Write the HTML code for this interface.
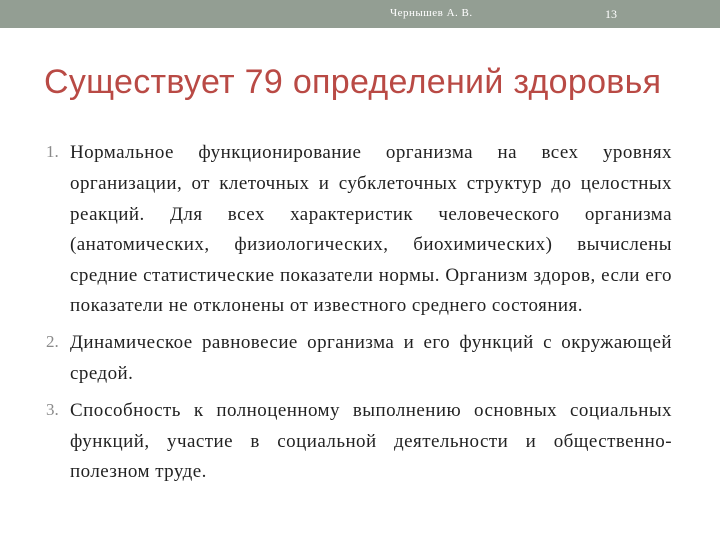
<!DOCTYPE html>
<html><head><meta charset="utf-8"><style>
body{margin:0;width:720px;height:540px;background:#fff;position:relative;overflow:hidden;font-family:"Liberation Serif",serif;}
.bar{position:absolute;left:0;top:0;width:720px;height:28px;background:#939e93;}
.hd{position:absolute;top:7px;color:#fff;font-family:"Liberation Serif",serif;font-size:11px;}
.t{position:absolute;left:44px;top:63px;font-family:"Liberation Sans",sans-serif;font-size:34px;color:#b94a45;white-space:nowrap;letter-spacing:0.3px;}
.l{position:absolute;left:70px;width:602px;font-size:19px;letter-spacing:0.45px;color:#222;white-space:nowrap;line-height:20px;}
.j{text-align:justify;text-align-last:justify;}
.n{position:absolute;left:46px;font-size:17px;color:#8a8a8a;line-height:20px;}
</style></head><body>
<div class="bar"></div>
<div class="hd" style="left:390px;letter-spacing:0.5px">Чернышев А. В.</div>
<div class="hd" style="left:605px;font-size:12px">13</div>
<div class="t">Существует 79 определений здоровья</div>
<div class="n" style="top:142px">1.</div>
<div class="l j" style="top:143px">Нормальное функционирование организма на всех уровнях</div>
<div class="l j" style="top:174px">организации, от клеточных и субклеточных структур до целостных</div>
<div class="l j" style="top:205px">реакций. Для всех характеристик человеческого организма</div>
<div class="l j" style="top:235px">(анатомических, физиологических, биохимических) вычислены</div>
<div class="l j" style="top:266px">средние статистические показатели нормы. Организм здоров, если его</div>
<div class="l" style="top:296px">показатели не отклонены от известного среднего состояния.</div>
<div class="n" style="top:332px">2.</div>
<div class="l j" style="top:333px">Динамическое равновесие организма и его функций с окружающей</div>
<div class="l" style="top:364px">средой.</div>
<div class="n" style="top:400px">3.</div>
<div class="l j" style="top:401px">Способность к полноценному выполнению основных социальных</div>
<div class="l j" style="top:432px">функций, участие в социальной деятельности и общественно-</div>
<div class="l" style="top:462px">полезном труде.</div>
</body></html>
